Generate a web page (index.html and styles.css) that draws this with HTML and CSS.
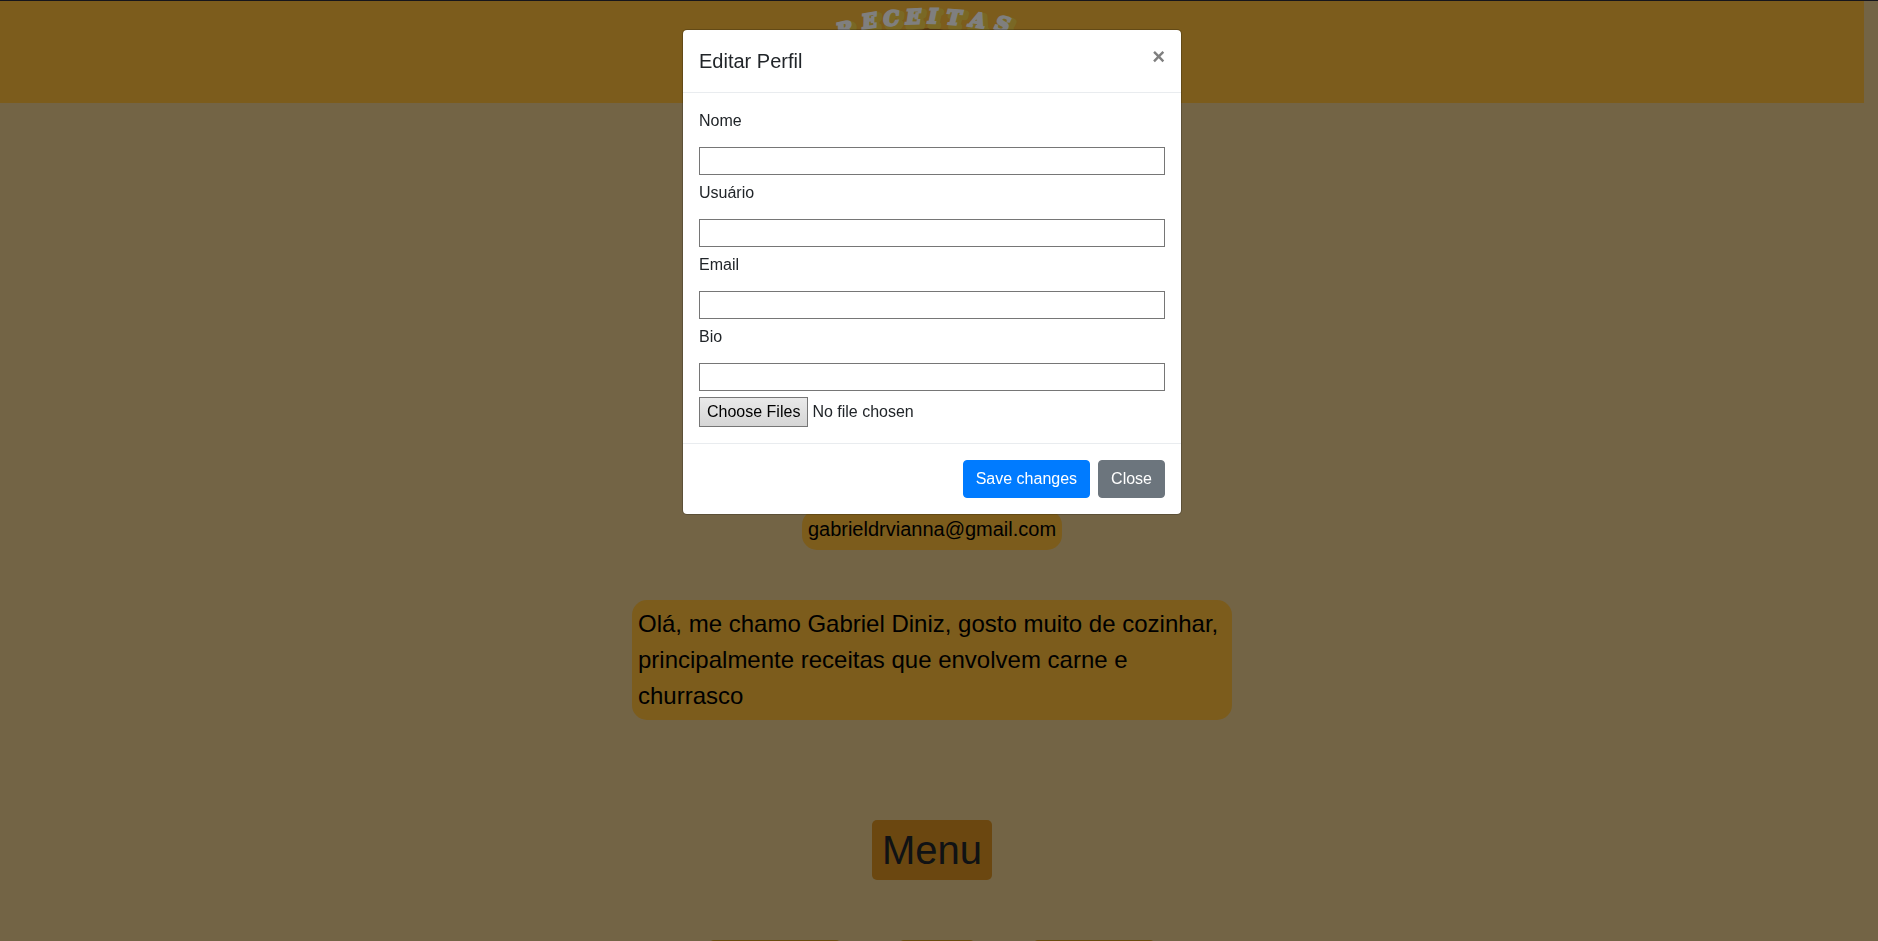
FILE: index.html
```html
<!DOCTYPE html>
<html lang="pt-BR">
<head>
<meta charset="utf-8">
<title>Receitas - Perfil</title>
<link rel="stylesheet" href="styles.css">
</head>
<body>
<div class="page">
  <header class="topbar">
    <svg class="logo" width="200" height="96" viewBox="0 0 200 96" role="img" aria-label="Receitas">
      <ellipse cx="96" cy="60" rx="46" ry="32" fill="#c08028"/>
      <g class="logo-text">
        <text class="logo-shadow" x="9 34 55 77 99 117 140 165" y="41 32 29 27 26 27 29 32" rotate="-12 -9 -5 -2 1 4 9 14">RECEITAS</text>
        <text class="logo-face" x="6 31 52 74 96 114 137 162" y="38 29 26 24 23 24 26 29" rotate="-12 -9 -5 -2 1 4 9 14">RECEITAS</text>
      </g>
    </svg>
  </header>
  <main class="profile">
    <p class="email">gabrieldrvianna@gmail.com</p>
    <p class="bio">Olá, me chamo Gabriel Diniz, gosto muito de cozinhar, principalmente receitas que envolvem carne e churrasco</p>
    <h1 class="menu-title">Menu</h1>
    <div class="menu-row">
      <span class="menu-item wide"></span>
      <span class="menu-item small"></span>
      <span class="menu-item medium"></span>
    </div>
  </main>
</div>
<div class="overlay">
  <section class="modal" role="dialog" aria-modal="true" aria-labelledby="modal-title">
    <div class="modal-header">
      <h2 class="modal-title" id="modal-title">Editar Perfil</h2>
      <button class="modal-x" type="button" aria-label="Fechar">×</button>
    </div>
    <form class="modal-form">
      <div class="modal-body">
        <label for="nome">Nome</label>
        <input class="field" id="nome" type="text">
        <label for="usuario">Usuário</label>
        <input class="field" id="usuario" type="text">
        <label for="email">Email</label>
        <input class="field" id="email" type="text">
        <label for="bio">Bio</label>
        <input class="field" id="bio" type="text">
        <input class="file" type="file" aria-label="Foto" multiple>
      </div>
      <div class="modal-footer">
        <button class="btn primary" type="button">Save changes</button>
        <button class="btn secondary" type="button">Close</button>
      </div>
    </form>
  </section>
</div>
</body>
</html>
```
FILE: styles.css
```css
* { box-sizing: border-box; }

body {
  margin: 0;
  height: 100vh;
  overflow: hidden;
  background: #e6c88a;
  color: #212529;
  font: 16px/24px "Liberation Sans", Arial, sans-serif;
}

.page { padding-right: 14px; }

.topbar {
  display: flex;
  justify-content: center;
  background: #f8b838;
  padding-bottom: 7px;
}

.logo { display: block; }
.logo-text { font: italic bold 20px "DejaVu Serif", serif; }
.logo-shadow { fill: #f4d850; stroke: #f4d850; stroke-width: 6px; stroke-linejoin: round; opacity: 0.8; }
.logo-face { fill: #fff; stroke: #fff; stroke-width: 2px; }

.profile {
  display: flex;
  flex-direction: column;
  align-items: center;
  padding-top: 407px;
  color: #000;
}

.email, .bio {
  margin: 0;
  background: #f8b838;
  border-radius: 15px;
}

.email {
  padding: 4px 6px 6px;
  font-size: 20px;
  line-height: 30px;
}

.bio {
  width: 600px;
  max-width: 100%;
  margin-top: 50px;
  padding: 6px;
  font-size: 24px;
  line-height: 36px;
}

.menu-title {
  margin: 100px 0 60px;
  padding: 6px 10px;
  border-radius: 5px;
  background: #d68e20;
  color: #212529;
  font-size: 40px;
  font-weight: 400;
  line-height: 48px;
}

.menu-row { display: flex; gap: 58px; }
.menu-item { height: 48px; border-radius: 5px 5px 0 0; background: #d09820; }
.wide { width: 132px; }
.small { width: 76px; }
.medium { width: 122px; }

.overlay {
  position: fixed;
  inset: 0;
  display: flex;
  justify-content: center;
  align-items: flex-start;
  padding: 28px 14px 28px 0;
  border-top: 1px solid #16161c;
  background: rgba(0, 0, 0, 0.5);
}

.modal {
  width: 500px;
  max-width: 100%;
  border: 1px solid rgba(0, 0, 0, 0.2);
  border-radius: 5px;
  background: #fff;
  background-clip: padding-box;
}

.modal-header {
  display: flex;
  justify-content: space-between;
  align-items: flex-start;
  padding: 16px;
  border-bottom: 1px solid #e9ecef;
}

.modal-title {
  margin: 0;
  font-size: 20px;
  font-weight: 400;
  line-height: 30px;
}

.modal-x {
  padding: 0;
  border: 0;
  background: none;
  color: #7f7f7f;
  font: bold 22px/22px "Liberation Sans", Arial, sans-serif;
}

.modal-body {
  display: flex;
  flex-direction: column;
  padding: 16px;
}

.field {
  width: 100%;
  height: 28px;
  margin: 14px 0 6px;
  padding: 1px 4px;
  border: 1px solid #767676;
  background: #fff;
  font: inherit;
}

.file {
  height: 30px;
  font: inherit;
}

.file::file-selector-button {
  height: 30px;
  margin-right: 4px;
  padding: 1px 7px;
  border: 1px solid #767676;
  border-radius: 0;
  background: linear-gradient(#e9e9e9, #d6d6d6);
  color: #000;
  font: inherit;
}

.modal-footer {
  display: flex;
  justify-content: flex-end;
  gap: 8px;
  padding: 16px;
  border-top: 1px solid #e9ecef;
}

.btn {
  padding: 6px 12px;
  border: 1px solid transparent;
  border-radius: 4px;
  color: #fff;
  font: inherit;
}

.primary { border-color: #007bff; background: #007bff; }
.secondary { border-color: #6c757d; background: #6c757d; }
```
